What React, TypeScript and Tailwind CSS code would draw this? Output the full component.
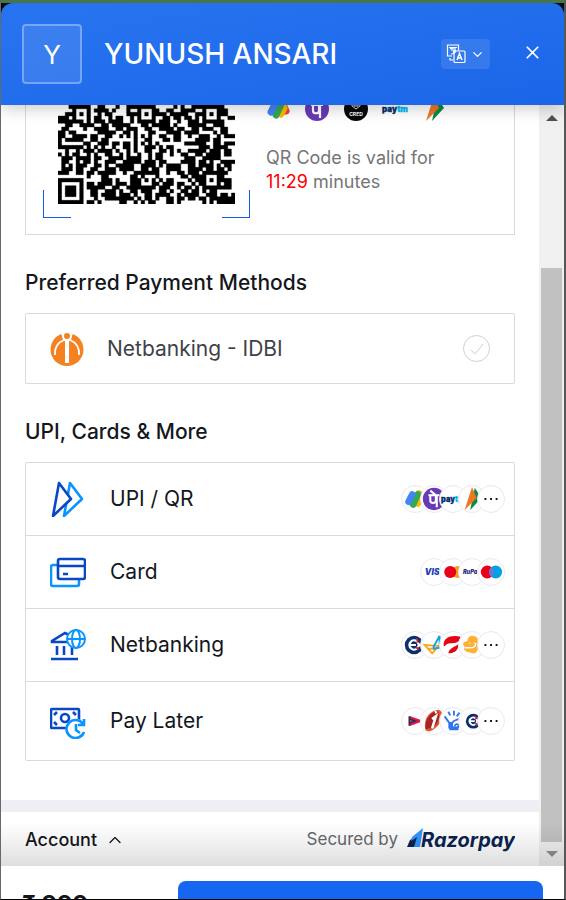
import type { ReactNode } from "react";
import { ChevronDown, ChevronUp, X } from "lucide-react";

const QR_ROWS = [
  "...######..##...#..########.....#.#..#########...",
  "....#...#.####.#...#..#...##..##..####..#...###..",
  "..###.#.#..#.##....####.#.####.#####..###.#.###..",
  "###.#...#.##..#.##..#.#...#..##.##.##.#.#...#..##",
  "#######.#.###.####..#.#####.###..#..###.######...",
  "..##..####..##.#####...##.#####.#...#####..###...",
  ".##....#..####..##.###..##..####.##..##.###..##..",
  "##.##......#####..##.#...##...####.####....#.##..",
  "##..####.##..##..#.#.#.#.#..##..##..#..###..#.###",
  "#.#####..##.##.......#..##...##.##....####.##....",
  "#......##..###.##.##.#.#.#.#.......######..##.###",
  "#######.#.#.#..#..##.#..###.#.##.......###.####..",
  "..#..#.###.####.#..#.#..##..##.#.#..#####.###.##.",
  "#.#.##..#.#..##..#.#..#..#.##..#..##..##.####.##.",
  ".###.####.##..####.####..#.##......###..#####....",
  ".##..#.##.#..###..#####.###.##....####.##.#..####",
  ".#.#.###..##.#..#####..####.#.####..##.####.#.##.",
  ".###.##..##..###.####..##.##..####..####.##.##.#.",
  "###..##.##.#####..#..#######..#..##.###.#######..",
  "........#...##......##.#...#......##.####...##...",
  "#######.....###.#...###.#.#.#.##....#.###.#.####.",
  "#.....#.##.####.###.###...##.###.##..#.##...#.##.",
  "#.###.#.#####..##..########.###..#.##.#.########.",
  "#.###.#..##..###.#..##.###..##.#..##.##.#.##.....",
  "#.###.#..##.####.###.#..##.####..#.####..###.##.#",
  "#.....#...#..########.#.##.#..##.##.##.##.#######",
  "#######.##.#.....##..#.#.##...##.#......#.#.#####",
];

const qrPath = QR_ROWS.map((row, y) =>
  [...row].map((cell, x) => (cell === "#" ? `M${x} ${y}h1v1h-1z` : "")).join(""),
).join("");

function GPay() {
  return (
    <g strokeWidth="7" strokeLinecap="round" fill="none">
      <path d="M19 9l3 7" stroke="#ea4335" />
      <path d="M18 8l2 5-3 6" stroke="#fbbc04" />
      <path d="M17 9l-5 11" stroke="#34a853" />
      <path d="M11 9L7 17" stroke="#4285f4" />
    </g>
  );
}

function PhonePe() {
  return (
    <g>
      <circle cx="14" cy="14" r="12" fill="#673ab7" />
      <path d="M8 10h12M10 10v6c0 3 6 3 6 0v-6M17 10v13M10 5l6 5" stroke="#fff" strokeWidth="2.2" fill="none" />
    </g>
  );
}

function Cred() {
  return (
    <g>
      <circle cx="14" cy="14" r="12" fill="#080808" />
      <path d="M10 6h8v5l-4 3-4-3zM12 8h4v3h-4z" stroke="#ddd" strokeWidth="1" fill="none" />
      <text x="14" y="21" fontSize="5" fontWeight="700" textAnchor="middle" fill="#fff">CRED</text>
    </g>
  );
}

function Paytm() {
  return (
    <text x="14" y="17" fontSize="8" fontWeight="900" textAnchor="middle" fill="#002e6e" stroke="#002e6e" strokeWidth="0.3">
      pay<tspan fill="#00b9f1" stroke="#00b9f1">tm</tspan>
    </text>
  );
}

function Bhim() {
  return (
    <g>
      <path d="M17 2l7 11L12 26z" fill="#0b8a43" />
      <path d="M14 1l5 12L6 26z" fill="#ee7624" />
    </g>
  );
}

function Visa() {
  return <text x="12" y="17" fontSize="9" fontWeight="900" fontStyle="italic" textAnchor="middle" fill="#1740bb">VIS</text>;
}

function MasterCard() {
  return (
    <g>
      <circle cx="19" cy="14" r="6.500" fill="#f79e1b" />
      <circle cx="11" cy="14" r="6.500" fill="#eb001b" />
    </g>
  );
}

function RuPay() {
  return <text x="12" y="16" fontSize="6" fontWeight="900" fontStyle="italic" textAnchor="middle" fill="#1f2a78">RuPa</text>;
}

function Maestro() {
  return (
    <g>
      <circle cx="10" cy="14" r="7" fill="#eb001b" />
      <circle cx="19" cy="14" r="7" fill="#00a2e5" />
      <path d="M14.500 8.600a7 7 0 010 10.800a7 7 0 010-10.800z" fill="#7375cf" />
    </g>
  );
}

function BankSeal() {
  return (
    <g>
      <circle cx="13" cy="14" r="10" fill="#0b2e6f" />
      <path d="M16 10a5 5 0 100 8M8 14h7" stroke="#fff" strokeWidth="2.400" fill="none" />
      <path d="M14 8l7 6h-4zM14 20l7-6h-4z" fill="#fff" />
      <path d="M15 6l3 3-2 4zM14 17l4-1v4z" fill="#e3242b" />
    </g>
  );
}

function Triangles() {
  return (
    <g fill="none" strokeWidth="2">
      <path d="M4 14l15 1-7 8zM8 18h8" stroke="#f7a823" />
      <path d="M20 4l-7 13M20 4v13l-7 1" stroke="#16a0e0" />
    </g>
  );
}

function RedLeaf() {
  return (
    <g fill="#e30613">
      <path d="M4 15C3 6 12 3 22 5c0 6-5 7-11 7-5 0-5 4-7 3z" />
      <path d="M20 13c0 8-6 10-11 10 1-6 6-6 11-10z" />
    </g>
  );
}

function Flower() {
  return (
    <g>
      <path d="M14 4c5 0 7 3 6 6 4 1 4 8 0 9-1 4-5 5-8 3-5 0-8-3-6-6-3-3-1-6 3-6 0-3 2-6 5-6z" fill="#ffb033" />
      <path d="M6 17h6c4 0 6-2 6-5M11 12h1M16 12h1" stroke="#fff" strokeWidth="1.500" fill="none" />
    </g>
  );
}

function Lazy() {
  return (
    <g fill="none" strokeWidth="3">
      <path d="M8 10l11 4-11 4" stroke="#e21b4d" />
      <path d="M8 9v10M8 12l6 2-6 2" stroke="#3b2850" strokeWidth="2" />
    </g>
  );
}

function Icici() {
  return (
    <g>
      <path d="M5 24C2 12 9 3 19 2c7 2 4 15-4 20-4 3-7 4-10 2z" fill="#e2562b" />
      <path d="M5 23C4 12 10 5 17 3c5 3 2 14-4 18z" fill="#a6232b" />
      <path d="M12 12l4-3-4 13M15 5l2-1" stroke="#fff" strokeWidth="2.800" fill="none" />
    </g>
  );
}

function Hands() {
  return (
    <g fill="none" stroke="#2f74ef" strokeWidth="2">
      <path d="M5 9l5 7v6M9 4l2 4M15 3v5M21 5l-3 4M22 11l-7 3c-6 4 0 11 5 6 1-3-4-4-4 0" />
      <path d="M12 15v7h8" strokeWidth="4" />
    </g>
  );
}

function SmallSeal() {
  return (
    <g transform="translate(5 3) scale(.8)">
      <BankSeal />
    </g>
  );
}

function More() {
  return (
    <g fill="#000">
      <rect x="7" y="13" width="2" height="2" />
      <rect x="13" y="13" width="2" height="2" />
      <rect x="19" y="13" width="2" height="2" />
    </g>
  );
}

function Badges({ items }: { items: (() => ReactNode)[] }) {
  return (
    <span className="mr-[9px] flex">
      {items.map((Item, i) => (
        <svg key={i} viewBox="0 0 28 28" className="-ml-[9px] size-7 rounded-full border border-[#e9e9f1] bg-white">
          <Item />
        </svg>
      ))}
    </span>
  );
}

const DARK = "#0848c4";
const LIGHT = "#0a94ff";

function UpiIcon() {
  return (
    <g strokeLinejoin="round">
      <path d="M20 2l12 16-18 17z" stroke={LIGHT} />
      <path d="M9 2l12 16L3 35z" stroke={DARK} fill="#fff" />
    </g>
  );
}

function CardIcon() {
  return (
    <g strokeLinejoin="round">
      <path d="M8 11H3q-2 0-2 2v17q0 2 2 2h24q2 0 2-2v-4" stroke={LIGHT} />
      <rect x="8" y="5" width="27" height="20" rx="2" stroke={DARK} />
      <path d="M8 12h27M13 20h5" stroke={DARK} />
    </g>
  );
}

function BankIcon() {
  return (
    <g>
      <path d="M18 15H2V14L15 6l4 2M7 19v9M14 19v9M22 19v9M1 32h27" stroke={DARK} />
      <g stroke={LIGHT} strokeWidth="2">
        <circle cx="26" cy="12" r="9" fill="#fff" />
        <ellipse cx="26" cy="12" rx="4" ry="9" />
        <path d="M17 12h18" />
      </g>
    </g>
  );
}

function LaterIcon() {
  return (
    <g>
      <rect x="1" y="6" width="28" height="19" rx="1" stroke={DARK} />
      <circle cx="15" cy="15" r="4" stroke={DARK} />
      <path d="M4 12l3-3M26 12l-3-3M4 19l3 3" stroke={DARK} />
      <circle cx="26" cy="26" r="10" fill="#fff" stroke="none" />
      <path d="M33 21a9 9 0 10 1 8M34 16v6h-6M26 21v6l4 3" stroke={LIGHT} />
    </g>
  );
}

const METHODS = [
  { name: "UPI / QR", Icon: UpiIcon, badges: [GPay, PhonePe, Paytm, Bhim, More] },
  { name: "Card", Icon: CardIcon, badges: [Visa, MasterCard, RuPay, Maestro] },
  { name: "Netbanking", Icon: BankIcon, badges: [BankSeal, Triangles, RedLeaf, Flower, More] },
  { name: "Pay Later", Icon: LaterIcon, badges: [Lazy, Icici, Hands, SmallSeal, More] },
];

function Header() {
  return (
    <header className="relative z-10 flex h-[102px] shrink-0 items-center rounded-t-xl bg-linear-to-br from-[#2874f0] to-[#1a66e8] pr-[21px] pl-[21px] text-white shadow-[0_4px_16px_rgba(0,0,0,0.2)]">
      <span className="flex size-[60px] items-center justify-center rounded-sm border-2 border-white/30 bg-white/10 text-[26px]">Y</span>
      <h1 className="ml-[22px] flex-1 text-[28px] leading-9 font-medium">YUNUSH ANSARI</h1>
      <button aria-label="Change language" className="flex h-[30px] w-[49px] items-center justify-center gap-1 rounded-sm bg-white/10">
        <svg viewBox="0 0 20 20" className="size-5" fill="none" stroke="currentColor" strokeWidth="1.200">
          <path d="M6 12H1.500V1h11v5.500M3 3.500h8M4 5q4-2 3 1H5M7 7q3 3-2 3M9 4v5M7 7h3M4 14v2h3" />
          <rect x="8" y="7" width="11" height="11.500" rx="1" />
          <path d="M11 16l2.500-6.500L16 16M12 14h3" strokeWidth="1.500" />
        </svg>
        <ChevronDown size={15} />
      </button>
      <button aria-label="Close" className="ml-8 pb-1">
        <X size={21} strokeWidth={2} />
      </button>
    </header>
  );
}

function QrCard() {
  return (
    <section className="flex h-[130px] border border-t-0 border-[#d9dadc]">
      <div className="relative ml-[17px] h-[113px] w-[207px] shrink-0 px-[15px]">
        <svg viewBox="0 0 49 27" preserveAspectRatio="none" className="h-[99px] w-[177px]" role="img" aria-label="QR code">
          <path d={qrPath} stroke="#000" strokeWidth="0.100" />
        </svg>
        <span className="absolute bottom-0 left-0 h-7 w-7 border-b border-l border-[#155bea]" />
        <span className="absolute right-0 bottom-0 h-7 w-7 border-r border-b border-[#155bea]" />
      </div>
      <div className="ml-4 flex-1">
        <div className="-ml-0.5 flex h-[18px] items-end gap-[11px] overflow-hidden">
          {[GPay, PhonePe, Cred, Paytm, Bhim].map((Logo, i) => (
            <svg key={i} viewBox="0 0 28 28" className="size-7 shrink-0">
              <Logo />
            </svg>
          ))}
        </div>
        <p className="mt-[23px] text-lg leading-6 text-[#757575]">
          QR Code is valid for
          <br />
          <span className="text-[#ff0000]">11:29</span> minutes
        </p>
      </div>
    </section>
  );
}

function IdbiLogo() {
  return (
    <svg viewBox="0 0 34 34" className="size-[34px]">
      <circle cx="17" cy="17.500" r="16.500" fill="#f58220" />
      <path d="M11 0L14 9H20L23 0z" fill="#fff" />
      <path d="M5 23Q4 12 14 8M29 23Q30 12 20 8M12 1l2 7M22 1l-2 7" fill="none" stroke="#fff" strokeWidth="1.800" />
      <path d="M17 9v22" stroke="#fff" strokeWidth="4" />
      <circle cx="17" cy="4" r="3" fill="#f58220" />
    </svg>
  );
}

function Scrollbar() {
  return (
    <div aria-hidden="true" className="flex w-[25px] shrink-0 flex-col items-center bg-[#f0f0f0]">
      <svg viewBox="0 0 12 6" className="mt-2.5 h-1.5 w-3"><path d="M0 6l6-6 6 6z" fill="#505050" /></svg>
      <span className="mt-[147px] w-[21px] flex-1 bg-[#c1c1c1]" />
      <svg viewBox="0 0 12 6" className="my-[9px] h-1.5 w-3"><path d="M0 0l6 6 6-6z" fill="#909090" /></svg>
    </div>
  );
}

function RazorpayLogo() {
  return (
    <svg viewBox="0 0 109 26" className="h-[26px] w-[109px]" role="img" aria-label="Razorpay">
      <path d="M1 20l3-7 9-6-4 13z" fill="#0b2350" />
      <path d="M17 1L6 10l-1 4 6-4-3 10h6z" fill="#3395ff" />
      <text x="15" y="20" fontSize="20" fontWeight="700" fontStyle="italic" fill="#0b2350">Razorpay</text>
    </svg>
  );
}

export default function App() {
  return (
    <div className="flex h-screen flex-col overflow-hidden border-t-[3px] border-r-2 border-b border-l border-t-[#467548] border-r-[#55585b] border-b-black border-l-[#66686a] bg-[#0a0d12] font-[Inter,sans-serif] text-[#14171c]">
      <Header />
      <div className="relative flex min-h-0 flex-1 bg-white">
        <main className="min-w-0 flex-1 overflow-hidden">
          <div className="px-6">
            <QrCard />
            <h2 className="mt-[34px] text-[21px] leading-7 font-medium">Preferred Payment Methods</h2>
            <label className="mt-4 flex h-[71px] items-center rounded-xs border border-[#d9dadc] px-6 text-[21px] text-[#3f4247]">
              <IdbiLogo />
              <span className="ml-[23px] flex-1">Netbanking - IDBI</span>
              <span className="grid place-items-center">
                <input type="radio" name="preferred" className="col-start-1 row-start-1 size-[27px] appearance-none rounded-full border border-[#cfd0d2]" />
                <svg viewBox="0 0 16 16" className="pointer-events-none col-start-1 row-start-1 size-4" fill="none" stroke="#cfd0d2">
                  <path d="M2 9l4 4 8-10" />
                </svg>
              </span>
            </label>
            <h2 className="mt-[34px] text-[21px] leading-7 font-medium">UPI, Cards &amp; More</h2>
            <div className="mt-4 divide-y divide-[#d9dadc] rounded-xs border border-[#d9dadc]">
              {METHODS.map(({ name, Icon, badges }) => (
                <button key={name} className="flex h-[73px] w-full items-center text-left text-[21px] last:h-[78px]">
                  <svg viewBox="0 0 36 36" className="ml-6 size-9" fill="none" strokeWidth="2.600">
                    <Icon />
                  </svg>
                  <span className="ml-6 flex-1">{name}</span>
                  <Badges items={badges} />
                </button>
              ))}
            </div>
          </div>
          <div className="mt-[39px] h-3 bg-[#eeeef4]" />
          <div className="flex h-14 items-center px-6">
            <button className="flex items-center gap-2 text-lg font-medium">
              Account
              <ChevronUp size={20} strokeWidth={1.500} />
            </button>
            <span className="mr-2 ml-auto text-[17px] text-[#66696d]">Secured by</span>
            <RazorpayLogo />
          </div>
        </main>
        <Scrollbar />
        <div className="pointer-events-none absolute inset-x-0 bottom-0 h-11 bg-linear-to-t from-black/13 via-black/6 to-transparent" />
      </div>
      <footer className="flex h-[33px] shrink-0 items-start overflow-hidden bg-white pr-[21px] pl-[21px]">
        <strong className="mt-[23px] w-[156px] text-2xl leading-8 font-bold">₹ 999</strong>
        <button aria-label="Pay now" className="mt-[15px] h-14 flex-1 rounded-lg bg-[#1566f0]" />
      </footer>
    </div>
  );
}
